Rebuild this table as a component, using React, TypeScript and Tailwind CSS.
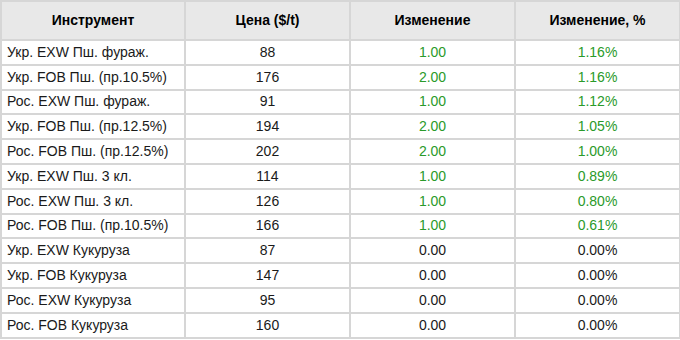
const rows: [string, string, string, string, boolean][] = [
  ['Укр. EXW Пш. фураж.', '88', '1.00', '1.16%', true],
  ['Укр. FOB Пш. (пр.10.5%)', '176', '2.00', '1.16%', true],
  ['Рос. EXW Пш. фураж.', '91', '1.00', '1.12%', true],
  ['Укр. FOB Пш. (пр.12.5%)', '194', '2.00', '1.05%', true],
  ['Рос. FOB Пш. (пр.12.5%)', '202', '2.00', '1.00%', true],
  ['Укр. EXW Пш. 3 кл.', '114', '1.00', '0.89%', true],
  ['Рос. EXW Пш. 3 кл.', '126', '1.00', '0.80%', true],
  ['Рос. FOB Пш. (пр.10.5%)', '166', '1.00', '0.61%', true],
  ['Укр. EXW Кукуруза', '87', '0.00', '0.00%', false],
  ['Укр. FOB Кукуруза', '147', '0.00', '0.00%', false],
  ['Рос. EXW Кукуруза', '95', '0.00', '0.00%', false],
  ['Рос. FOB Кукуруза', '160', '0.00', '0.00%', false],
];

export default function App() {
  return (
    <div className="w-[680px] h-[340px] bg-white font-['Liberation_Sans',Arial,sans-serif] text-[14px] text-[#1a1a1a]">
      <table className="w-[679px] table-fixed border-collapse border border-[#d6d6d6]">
        <colgroup>
          <col className="w-[184px]" />
          <col className="w-[165px]" />
          <col className="w-[165px]" />
          <col className="w-[165px]" />
        </colgroup>
        <thead>
          <tr className="h-[39px] bg-[#e8e8e8]">
            <th className="border-2 border-[#d6d6d6] font-bold text-black text-center">Инструмент</th>
            <th className="border-2 border-[#d6d6d6] font-bold text-black text-center">Цена ($/t)</th>
            <th className="border-2 border-[#d6d6d6] font-bold text-black text-center">Изменение</th>
            <th className="border-2 border-[#d6d6d6] font-bold text-black text-center">Изменение, %</th>
          </tr>
        </thead>
        <tbody>
          {rows.map(([name, price, ch, pct, up]) => (
            <tr key={name} className="h-[24.8px]">
              <td className="border-2 border-[#d6d6d6] pl-[5px] whitespace-nowrap">{name}</td>
              <td className="border-2 border-[#d6d6d6] text-center">{price}</td>
              <td className={`border-2 border-[#d6d6d6] text-center ${up ? 'text-[#2a9a2a]' : ''}`}>{ch}</td>
              <td className={`border-2 border-[#d6d6d6] text-center ${up ? 'text-[#2a9a2a]' : ''}`}>{pct}</td>
            </tr>
          ))}
        </tbody>
      </table>
    </div>
  );
}
